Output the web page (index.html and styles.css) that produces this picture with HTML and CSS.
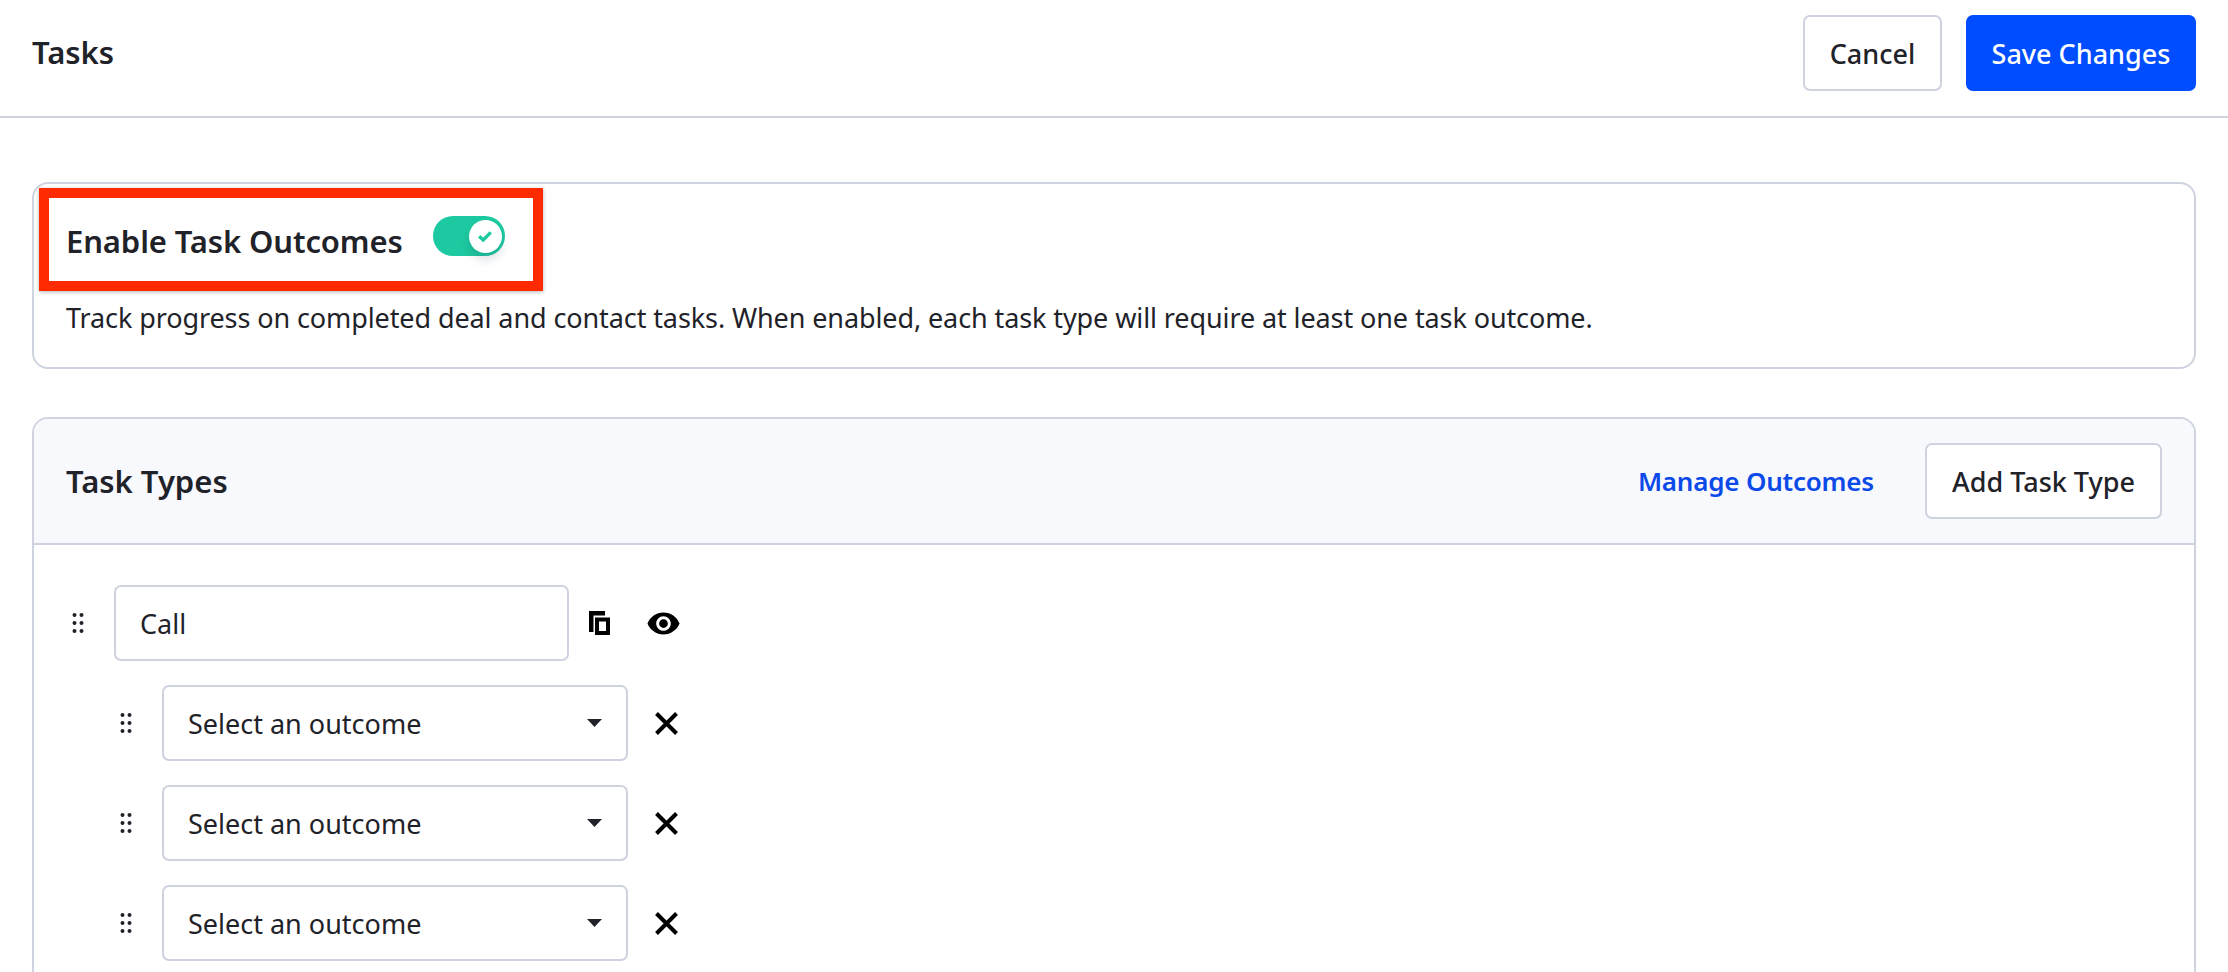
FILE: index.html
```html
<!DOCTYPE html>
<html lang="en">
<head>
<meta charset="utf-8">
<title>Tasks</title>
<link rel="stylesheet" href="styles.css">
</head>
<body>
<header class="topbar">
  <h1 class="page-title">Tasks</h1>
  <div class="topbar-actions">
    <button class="btn btn-cancel">Cancel</button>
    <button class="btn btn-primary">Save Changes</button>
  </div>
</header>
<main class="content">
  <section class="card card-enable">
    <div class="enable-head">
      <h2 class="enable-title">Enable Task Outcomes</h2>
      <span class="toggle">
        <span class="knob">
          <svg class="knob-check" width="14" height="11" viewBox="0 0 14 11"><path d="M1.2 5.2 L5.2 9 L12.8 1.4" fill="none" stroke="#1dc9a0" stroke-width="3.4"/></svg>
        </span>
      </span>
    </div>
    <p class="enable-desc">Track progress on completed deal and contact tasks. When enabled, each task type will require at least one task outcome.</p>
    <div class="highlight"></div>
  </section>

  <section class="card card-types">
    <div class="types-head">
      <h2 class="types-title">Task Types</h2>
      <div class="types-actions">
        <a class="link" href="#">Manage Outcomes</a>
        <button class="btn btn-add">Add Task Type</button>
      </div>
    </div>
    <div class="types-body">
      <div class="row row-type">
        <svg class="handle" width="24" height="24" viewBox="0 0 24 24"><g fill="#1f2329"><circle cx="8.5" cy="4" r="2"/><circle cx="15.5" cy="4" r="2"/><circle cx="8.5" cy="12" r="2"/><circle cx="15.5" cy="12" r="2"/><circle cx="8.5" cy="20" r="2"/><circle cx="15.5" cy="20" r="2"/></g></svg>
        <div class="field field-name">Call</div>
        <svg class="icon-copy" width="21" height="24" viewBox="0 0 21 24"><path d="M0 0H16V4.500H4.500V21H0Z" fill="#000"/><rect x="8" y="8.500" width="11" height="13.500" fill="none" stroke="#000" stroke-width="4"/></svg>
        <svg class="icon-eye" width="35" height="35" viewBox="0 0 24 24"><path d="M12 4.500C7 4.500 2.730 7.610 1 12c1.730 4.390 6 7.500 11 7.500s9.270-3.110 11-7.500c-1.730-4.390-6-7.500-11-7.500zM12 17c-2.760 0-5-2.240-5-5s2.240-5 5-5 5 2.240 5 5-2.240 5-5 5zm0-8c-1.660 0-3 1.340-3 3s1.340 3 3 3 3-1.340 3-3-1.340-3-3-3z" fill="#000"/></svg>
      </div>
      <div class="row row-outcome">
        <svg class="handle" width="24" height="24" viewBox="0 0 24 24"><g fill="#1f2329"><circle cx="8.5" cy="4" r="2"/><circle cx="15.5" cy="4" r="2"/><circle cx="8.5" cy="12" r="2"/><circle cx="15.5" cy="12" r="2"/><circle cx="8.5" cy="20" r="2"/><circle cx="15.5" cy="20" r="2"/></g></svg>
        <div class="field field-select"><span>Select an outcome</span><svg class="caret" width="15" height="8" viewBox="0 0 15 8"><path d="M0 0H15L7.500 8Z" fill="#1f2329"/></svg></div>
        <svg class="icon-x" width="23" height="23" viewBox="0 0 23 23"><path d="M1.500 1.500 21.500 21.500M21.500 1.500 1.500 21.500" stroke="#000" stroke-width="4" fill="none"/></svg>
      </div>
      <div class="row row-outcome">
        <svg class="handle" width="24" height="24" viewBox="0 0 24 24"><g fill="#1f2329"><circle cx="8.5" cy="4" r="2"/><circle cx="15.5" cy="4" r="2"/><circle cx="8.5" cy="12" r="2"/><circle cx="15.5" cy="12" r="2"/><circle cx="8.5" cy="20" r="2"/><circle cx="15.5" cy="20" r="2"/></g></svg>
        <div class="field field-select"><span>Select an outcome</span><svg class="caret" width="15" height="8" viewBox="0 0 15 8"><path d="M0 0H15L7.500 8Z" fill="#1f2329"/></svg></div>
        <svg class="icon-x" width="23" height="23" viewBox="0 0 23 23"><path d="M1.500 1.500 21.500 21.500M21.500 1.500 1.500 21.500" stroke="#000" stroke-width="4" fill="none"/></svg>
      </div>
      <div class="row row-outcome">
        <svg class="handle" width="24" height="24" viewBox="0 0 24 24"><g fill="#1f2329"><circle cx="8.5" cy="4" r="2"/><circle cx="15.5" cy="4" r="2"/><circle cx="8.5" cy="12" r="2"/><circle cx="15.5" cy="12" r="2"/><circle cx="8.5" cy="20" r="2"/><circle cx="15.5" cy="20" r="2"/></g></svg>
        <div class="field field-select"><span>Select an outcome</span><svg class="caret" width="15" height="8" viewBox="0 0 15 8"><path d="M0 0H15L7.500 8Z" fill="#1f2329"/></svg></div>
        <svg class="icon-x" width="23" height="23" viewBox="0 0 23 23"><path d="M1.500 1.500 21.500 21.500M21.500 1.500 1.500 21.500" stroke="#000" stroke-width="4" fill="none"/></svg>
      </div>
    </div>
  </section>
</main>
</body>
</html>
```

FILE: styles.css
```css
* { box-sizing: border-box; }
html, body { margin: 0; height: 972px; overflow: hidden; background: #fff; }
body { font-family: "Noto Sans", "Liberation Sans", sans-serif; color: #1f2329; font-size: 27px; }
h1, h2, p { margin: 0; }

.topbar {
  height: 118px;
  border-bottom: 2px solid #cfd3e0;
  display: flex;
  align-items: flex-start;
  justify-content: space-between;
  padding: 15px 32px 0;
}
.page-title { font-size: 31px; font-weight: 600; line-height: 38px; margin-top: 18px; }
.topbar-actions { display: flex; gap: 24px; }

.btn {
  font: 500 27px/1 "Noto Sans", "Liberation Sans", sans-serif;
  height: 76px;
  border-radius: 7px;
  border: 2px solid #cfd3e0;
  background: #fff;
  color: #1f2329;
  padding: 0;
}
.btn-cancel { width: 139px; }
.btn-primary { width: 230px; background: #004cff; border-color: #004cff; color: #fff; }
.btn-add { width: 237px; height: 76px; }

.content { padding: 64px 32px 0; display: flex; flex-direction: column; gap: 48px; }

.card { border: 2px solid #cfd3e0; border-radius: 16px; background: #fff; }
.card-enable { height: 187px; padding: 32px 32px 0; position: relative; }
.enable-head { display: flex; align-items: flex-start; gap: 30px; }
.enable-title { font-size: 31px; font-weight: 600; line-height: 50px; letter-spacing: -0.12px; }
.toggle {
  width: 72px; height: 40px;
  background: #1dc9a0; border-radius: 20px;
  display: flex; align-items: center; justify-content: flex-end;
  padding-right: 3px;
}
.knob {
  width: 33px; height: 33px; border-radius: 50%; background: #fff;
  display: flex; align-items: center; justify-content: center;
  box-shadow: 0 7px 10px rgba(30, 40, 70, .14);
}
.enable-desc { font-size: 27px; line-height: 36px; margin-top: 34px; letter-spacing: -0.1px; }
.highlight {
  position: absolute; left: 5px; top: 4px;
  width: 504px; height: 103px;
  border: 10px solid #ff2a00;
  box-shadow: 0 1px 4px rgba(0, 0, 0, .3);
  pointer-events: none;
}

.card-types { height: 800px; overflow: hidden; }
.types-head {
  height: 126px;
  background: #f8f9fd;
  border-bottom: 2px solid #cfd3e0;
  display: flex; align-items: center; justify-content: space-between;
  padding: 0 32px;
}
.types-title { font-size: 31px; font-weight: 600; }
.types-actions { display: flex; align-items: center; gap: 51px; }
.link { color: #0b4ae8; text-decoration: none; font-size: 26px; font-weight: 600; letter-spacing: -0.2px; }

.types-body { padding: 40px 32px 0; display: flex; flex-direction: column; gap: 24px; }
.row { display: flex; align-items: center; height: 76px; }
.row-type .handle { margin-right: 24px; }
.row-outcome { margin-left: 48px; }
.row-outcome .handle { margin-right: 24px; }
.field {
  height: 76px; border: 2px solid #cfd3e0; border-radius: 7px; background: #fff;
  display: flex; align-items: center; padding: 0 24px;
}
.field-name { width: 455px; }
.field-select { width: 466px; justify-content: space-between; padding-right: 24px; }
.icon-copy { margin-left: 20px; }
.icon-eye { margin-left: 36px; }
.icon-x { margin-left: 27px; }
```
